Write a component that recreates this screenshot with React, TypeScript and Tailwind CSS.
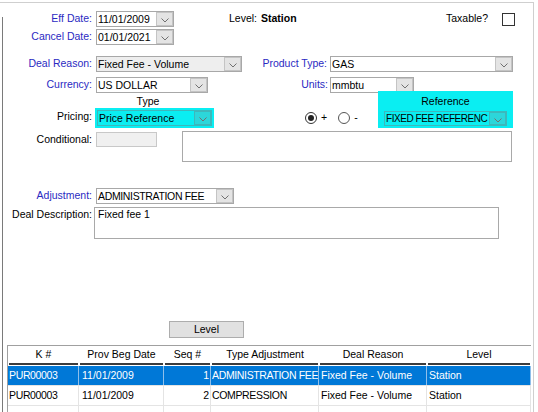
import React from "react";

const Chev = () => (
  <svg width="8" height="5" viewBox="0 0 8 5" className="mt-[3px]">
    <path d="M0.5 0.5 L4 4 L7.5 0.5" fill="none" stroke="#707070" strokeWidth="1" />
  </svg>
);

function Sel({
  w,
  v,
  bg = "bg-white",
  h = "h-[16px]",
  btn = "bg-[#e4e4e4] border-[#c4c4c4]",
  border = "border-[#a8a8a8]",
  text = "",
}: {
  w: string;
  v: string;
  bg?: string;
  h?: string;
  btn?: string;
  border?: string;
  text?: string;
}) {
  return (
    <div className={`flex shrink-0 border ${border} ${bg} ${h} ${w}`}>
      <div className={`flex-1 min-w-0 overflow-hidden whitespace-nowrap pl-[1px] leading-[14px] ${text}`}>{v}</div>
      <div className={`w-[17px] h-full shrink-0 border ${btn} flex items-center justify-center`}>
        <Chev />
      </div>
    </div>
  );
}

const BLUE = "text-[#2a2ac2]";
const UP = "tracking-[-0.35px]";

function Lbl({ t, blue = true, w = "w-[89px]" }: { t: string; blue?: boolean; w?: string }) {
  return <div className={`${w} shrink-0 text-right whitespace-nowrap ${blue ? BLUE : "text-black"}`}>{t}</div>;
}

const cols = [
  { w: "w-[71px]", h: "K #", a: "text-left pl-[1px]" },
  { w: "w-[85px]", h: "Prov Beg Date", a: "text-left pl-[3px]" },
  { w: "w-[47px]", h: "Seq #", a: "text-right pr-[1px]" },
  { w: "w-[108px]", h: "Type Adjustment", a: "text-left pl-[1px]" },
  { w: "w-[108px]", h: "Deal Reason", a: "text-left pl-[2px]" },
  { w: "w-[104px]", h: "Level", a: "text-left pl-[2px]" },
];

const rows = [
  ["PUR00003", "11/01/2009", "1", "ADMINISTRATION FEE", "Fixed Fee - Volume", "Station"],
  ["PUR00003", "11/01/2009", "2", "COMPRESSION", "Fixed Fee - Volume", "Station"],
  ["", "", "", "", "", ""],
];

export default function App() {
  return (
    <div
      className="w-[538px] h-[412px] bg-white overflow-hidden text-[10.5px] text-black"
      style={{ fontFamily: '"Liberation Sans", Arial, sans-serif' }}
    >
      <div className="mt-[2px] w-[534px] h-[410px] border-t border-r border-[#cfcfcf] flex">
        <div className="w-[3px] shrink-0 pt-[14px]">
          <div className="h-full border-r border-[#7a7a7a]" />
        </div>
        <div className="flex-1 flex flex-col">
          {/* Row 1 */}
          <div className="flex items-center h-[16px] mt-[8px]">
            <Lbl t="Eff Date:" />
            <div className="ml-[4px]">
              <Sel w="w-[78px]" v="11/01/2009" />
            </div>
            <div className="ml-[55px]">Level:</div>
            <div className="ml-[4px] font-bold">Station</div>
            <div className="ml-auto flex items-center mr-[18px]">
              <span>Taxable?</span>
              <div className="ml-[14px] w-[13px] h-[13px] border border-[#333] bg-white" />
            </div>
          </div>
          {/* Row 2 */}
          <div className="flex items-center h-[16px] mt-[2px]">
            <Lbl t="Cancel Date:" />
            <div className="ml-[4px]">
              <Sel w="w-[78px]" v="01/01/2021" />
            </div>
          </div>
          {/* Row 3 */}
          <div className="flex items-center h-[16px] mt-[11px]">
            <Lbl t="Deal Reason:" />
            <div className="ml-[4px]">
              <Sel w="w-[146px]" v="Fixed Fee - Volume" bg="bg-[#eeeeee]" />
            </div>
            <Lbl t="Product Type:" w="w-[85px]" />
            <div className="ml-[3px]">
              <Sel w="w-[183px]" v="GAS" />
            </div>
          </div>
          {/* Row 4 */}
          <div className="flex items-center h-[16px] mt-[5px]">
            <Lbl t="Currency:" />
            <div className="ml-[4px]">
              <Sel w="w-[112px]" v="US DOLLAR" />
            </div>
            <Lbl t="Units:" w="w-[120px]" />
            <div className="ml-[2px]">
              <Sel w="w-[84px]" v="mmbtu" />
            </div>
          </div>
          {/* Pricing block */}
          <div className="flex h-[37px] mt-[-2px]">
            <div className="w-[89px] shrink-0 text-right flex items-end justify-end pb-[3px]">Pricing:</div>
            <div className="ml-[3px] flex flex-col w-[119px] shrink-0">
              <div className="h-[14px] leading-[14px] mt-[3px] w-[106px] text-center">Type</div>
              <div className="h-[20px] bg-[#0aeef2] p-[2px]">
                <Sel
                  w="w-[115px]"
                  v="Price Reference"
                  bg="bg-[#0aeef2]"
                  border="border-[#3cb8bc]"
                  btn="bg-[#2cd6da] border-[#3cb8bc]"
                />
              </div>
            </div>
            <div className="self-end h-[20px] flex items-center ml-[91px]">
              <div className="w-[12px] h-[12px] rounded-full border border-[#333] bg-white flex items-center justify-center">
                <div className="w-[6px] h-[6px] rounded-full bg-[#222]" />
              </div>
              <span className="ml-[4px]">+</span>
              <div className="ml-[11px] w-[12px] h-[12px] rounded-full border border-[#555] bg-white" />
              <span className="ml-[4px]">-</span>
            </div>
            <div className="ml-auto mr-[20px] w-[135px] bg-[#0aeef2] flex flex-col items-center">
              <div className="h-[20px] leading-[20px]">Reference</div>
              <Sel
                w="w-[123px]"
                h="h-[15px]"
                v="FIXED FEE REFERENC"
                bg="bg-[#0aeef2]"
                border="border-[#3cb8bc]"
                btn="bg-[#2cd6da] border-[#3cb8bc]"
                text="text-[10px] tracking-[-0.45px] leading-[13px]"
              />
            </div>
          </div>
          {/* Conditional */}
          <div className="flex items-start h-[31px] mt-[3px]">
            <div className="w-[89px] shrink-0 text-right h-[16px] leading-[16px]">Conditional:</div>
            <div className="ml-[4px] mt-[1px] w-[61px] h-[15px] bg-[#f0f0f0] border border-[#c8c8c8]" />
            <div className="ml-[25px] w-[330px] h-[31px] border border-[#a9a9a9] bg-white" />
          </div>
          {/* Adjustment */}
          <div className="flex items-center h-[16px] mt-[26px]">
            <Lbl t="Adjustment:" />
            <div className="ml-[4px]">
              <Sel w="w-[138px]" v="ADMINISTRATION FEE" text={UP} />
            </div>
          </div>
          {/* Deal Description */}
          <div className="flex items-start h-[32px] mt-[3px]">
            <div className="w-[89px] shrink-0 text-right h-[14px] leading-[14px] whitespace-nowrap">Deal Description:</div>
            <div className="ml-[2px] w-[405px] h-[32px] border border-[#a9a9a9] bg-white px-[3px] leading-[13px]">
              Fixed fee 1
            </div>
          </div>
          {/* Level button */}
          <div className="mt-[82px] ml-[166px] w-[75px] h-[17px] bg-[#e1e1e1] border border-[#adadad] text-center leading-[15px]">
            Level
          </div>
          {/* Table */}
          <div className="mt-[7px] ml-[4px] w-[524px] border-t border-l border-[#a0a0a0] flex-1">
            <div className="flex h-[20px]">
              {cols.map((c) => (
                <div key={c.h} className={`${c.w} shrink-0 flex flex-col`}>
                  <div className="h-[17px] leading-[17px] text-center">{c.h}</div>
                  <div className="h-[2px] mx-[1px] bg-[#3c3c3c]" />
                </div>
              ))}
            </div>
            {rows.map((r, i) => (
              <div
                key={i}
                className={`flex h-[20px] border-b border-[#e4e4e4] ${i === 0 ? "bg-[#0078d7] text-white" : "bg-white"}`}
              >
                {cols.map((c, j) => (
                  <div
                    key={j}
                    className={`${c.w} shrink-0 border-r ${i === 0 ? "border-[#8fbfea]" : "border-[#e4e4e4]"} leading-[19px] whitespace-nowrap overflow-hidden ${c.a} ${j === 0 || j === 3 ? UP : ""}`}
                  >
                    {r[j]}
                  </div>
                ))}
              </div>
            ))}
          </div>
        </div>
      </div>
    </div>
  );
}
